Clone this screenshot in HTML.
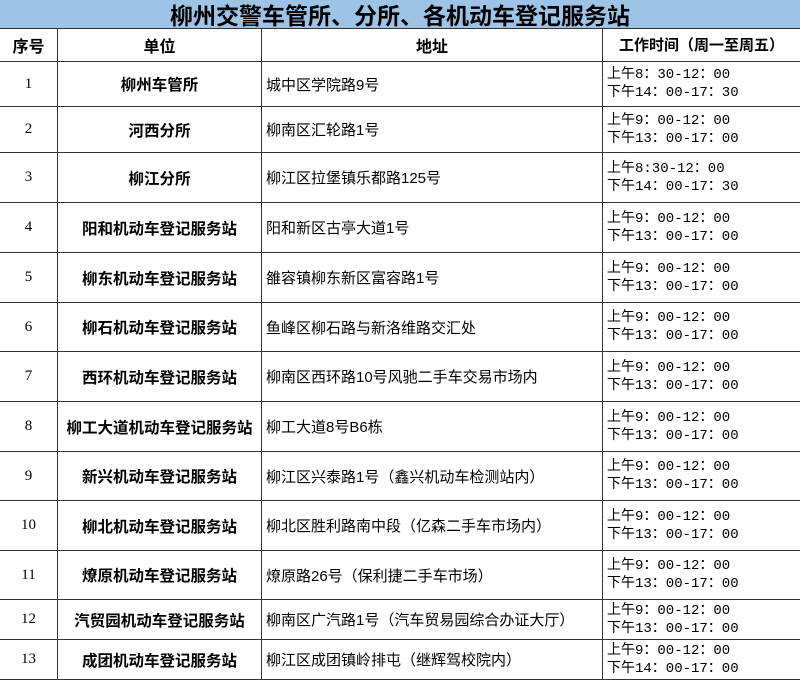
<!DOCTYPE html>
<html><head><meta charset="utf-8"><style>
body{margin:0;width:800px;height:681px;background:#fff;font-family:"Liberation Sans","Noto Sans CJK SC",sans-serif;color:#000;position:relative;overflow:hidden}
.t{position:absolute;left:0;top:0;width:800px;height:29px;background:#9dc3e6;border-bottom:1px solid #333;font-size:23px;font-weight:bold;text-align:center;line-height:29px;font-family:"Noto Sans CJK SC",sans-serif;box-sizing:border-box}
.r{position:absolute;left:0;width:800px;border-bottom:1px solid #333;box-sizing:border-box}
.c{position:absolute;top:0;bottom:0;display:flex;align-items:center;box-sizing:border-box}
.c1{left:0;width:58px;justify-content:center;font-family:"Liberation Serif",serif;font-size:15px;border-right:1px solid #333}
.c2{left:58px;width:204px;justify-content:center;font-weight:bold;font-size:15.5px;border-right:1px solid #333;white-space:nowrap}
.c3{left:262px;width:341px;padding-left:4px;font-size:15px;border-right:1px solid #333;white-space:nowrap}
.c4{left:603px;width:197px;padding-left:4px;font-size:14px;line-height:18px;font-family:"Liberation Mono","Noto Sans CJK SC",monospace}
.h .c{font-weight:bold;font-size:16px;justify-content:center;font-family:"Noto Sans CJK SC",sans-serif}
.h .c4{justify-content:center;padding:0;font-size:15px}
</style></head><body>
<div class="t">柳州交警车管所、分所、各机动车登记服务站</div>
<div class="r h" style="top:29px;height:33px"><div class="c c1">序号</div><div class="c c2">单位</div><div class="c c3" style="padding:0">地址</div><div class="c c4">工作时间（周一至周五）</div></div>
<div class="r" style="top:62px;height:45px"><div class="c c1">1</div><div class="c c2">柳州车管所</div><div class="c c3">城中区学院路9号</div><div class="c c4">上午8：30-12：00<br>下午14：00-17：30</div></div>
<div class="r" style="top:107px;height:46px"><div class="c c1">2</div><div class="c c2">河西分所</div><div class="c c3">柳南区汇轮路1号</div><div class="c c4">上午9：00-12：00<br>下午13：00-17：00</div></div>
<div class="r" style="top:153px;height:50px"><div class="c c1">3</div><div class="c c2">柳江分所</div><div class="c c3">柳江区拉堡镇乐都路125号</div><div class="c c4">上午8:30-12：00<br>下午14：00-17：30</div></div>
<div class="r" style="top:203px;height:50px"><div class="c c1">4</div><div class="c c2">阳和机动车登记服务站</div><div class="c c3">阳和新区古亭大道1号</div><div class="c c4">上午9：00-12：00<br>下午13：00-17：00</div></div>
<div class="r" style="top:253px;height:50px"><div class="c c1">5</div><div class="c c2">柳东机动车登记服务站</div><div class="c c3">雒容镇柳东新区富容路1号</div><div class="c c4">上午9：00-12：00<br>下午13：00-17：00</div></div>
<div class="r" style="top:303px;height:49px"><div class="c c1">6</div><div class="c c2">柳石机动车登记服务站</div><div class="c c3">鱼峰区柳石路与新洛维路交汇处</div><div class="c c4">上午9：00-12：00<br>下午13：00-17：00</div></div>
<div class="r" style="top:352px;height:50px"><div class="c c1">7</div><div class="c c2">西环机动车登记服务站</div><div class="c c3">柳南区西环路10号风驰二手车交易市场内</div><div class="c c4">上午9：00-12：00<br>下午13：00-17：00</div></div>
<div class="r" style="top:402px;height:50px"><div class="c c1">8</div><div class="c c2">柳工大道机动车登记服务站</div><div class="c c3">柳工大道8号B6栋</div><div class="c c4">上午9：00-12：00<br>下午13：00-17：00</div></div>
<div class="r" style="top:452px;height:49px"><div class="c c1">9</div><div class="c c2">新兴机动车登记服务站</div><div class="c c3">柳江区兴泰路1号（鑫兴机动车检测站内）</div><div class="c c4">上午9：00-12：00<br>下午13：00-17：00</div></div>
<div class="r" style="top:501px;height:50px"><div class="c c1">10</div><div class="c c2">柳北机动车登记服务站</div><div class="c c3">柳北区胜利路南中段（亿森二手车市场内）</div><div class="c c4">上午9：00-12：00<br>下午13：00-17：00</div></div>
<div class="r" style="top:551px;height:49px"><div class="c c1">11</div><div class="c c2">燎原机动车登记服务站</div><div class="c c3">燎原路26号（保利捷二手车市场）</div><div class="c c4">上午9：00-12：00<br>下午13：00-17：00</div></div>
<div class="r" style="top:600px;height:40px"><div class="c c1">12</div><div class="c c2">汽贸园机动车登记服务站</div><div class="c c3">柳南区广汽路1号（汽车贸易园综合办证大厅）</div><div class="c c4">上午9：00-12：00<br>下午13：00-17：00</div></div>
<div class="r" style="top:640px;height:40px"><div class="c c1">13</div><div class="c c2">成团机动车登记服务站</div><div class="c c3">柳江区成团镇岭排屯（继辉驾校院内）</div><div class="c c4">上午9：00-12：00<br>下午14：00-17：00</div></div>
</body></html>
